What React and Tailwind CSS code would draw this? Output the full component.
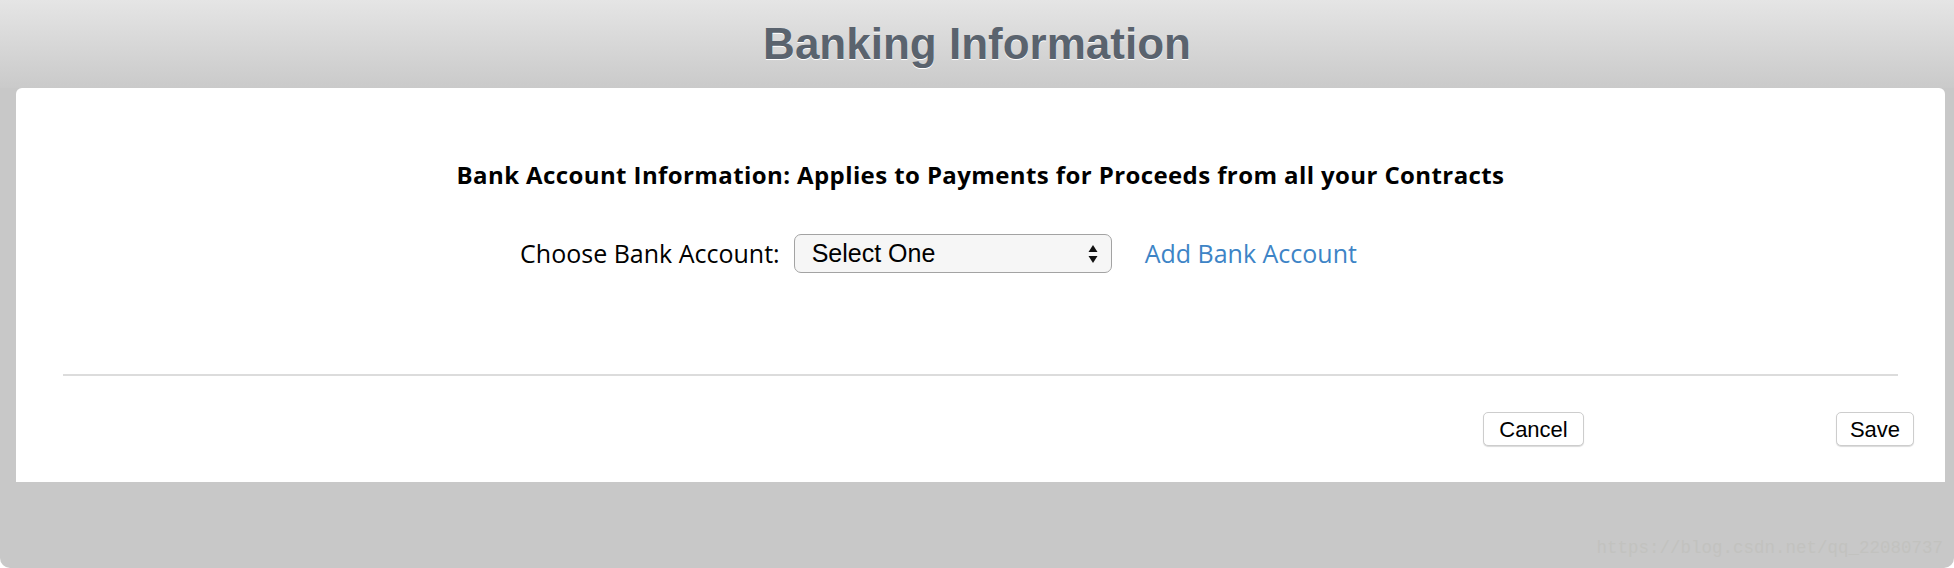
import React from 'react';

const SelectArrows = () => (
  <svg width="10" height="20" viewBox="0 0 10 20" className="shrink-0">
    <path d="M5 1 L9.5 8 L0.5 8 Z" fill="#111" />
    <path d="M0.5 12 L9.5 12 L5 19 Z" fill="#111" />
  </svg>
);

const App = () => {
  return (
    <div className="w-[1954px] h-[568px] bg-white">
      <div className="flex flex-col w-full h-full bg-[#c8c8c8] rounded-b-[10px] overflow-hidden">
        {/* Header */}
        <div className="h-[88px] shrink-0 bg-gradient-to-b from-[#e5e5e5] to-[#cacaca] flex justify-center pt-[19px]">
          <h1
            className="text-[44px] leading-[50px] font-bold text-[#5a636e] [text-shadow:0_1px_0_#ffffff]"
            style={{ fontFamily: '"Liberation Sans", Arial, sans-serif' }}
          >
            Banking Information
          </h1>
        </div>

        {/* Card */}
        <div
          className="ml-[16px] mr-[9px] bg-white rounded-t-[6px] flex flex-col pt-[71px] pb-[36px]"
          style={{ fontFamily: '"Open Sans", "Noto Sans", sans-serif' }}
        >
          <div className="text-center text-[24px] leading-[32px] font-bold text-black tracking-[0.4px]">
            Bank Account Information: Applies to Payments for Proceeds from all your Contracts
          </div>

          <div className="mt-[43px] flex items-center justify-center pr-[84px]">
            <span className="text-[25px] text-black">Choose Bank Account:</span>
            <div className="ml-[14px] w-[318px] h-[39px] rounded-[7px] border border-[#a3a3a3] bg-[#f6f6f6] flex items-center justify-between pl-[17px] pr-[13px]">
              <span
                className="text-[25px] text-black"
                style={{ fontFamily: '"Liberation Sans", Arial, sans-serif' }}
              >
                Select One
              </span>
              <SelectArrows />
            </div>
            <a href="#" className="ml-[33px] text-[25px] text-[#3d84c6]">
              Add Bank Account
            </a>
          </div>

          <div className="mt-[101px] mx-[47px] h-[2px] bg-[#dcdcdc]" />

          <div
            className="mt-[36px] flex justify-end gap-[252px] pr-[31px]"
            style={{ fontFamily: '"Liberation Sans", Arial, sans-serif' }}
          >
            <button className="w-[101px] h-[34px] rounded-[5px] border border-[#cdcdcd] bg-white text-[22px] text-black shadow-[0_1px_1px_rgba(0,0,0,0.15)]">
              Cancel
            </button>
            <button className="w-[78px] h-[34px] rounded-[5px] border border-[#cdcdcd] bg-white text-[22px] text-black shadow-[0_1px_1px_rgba(0,0,0,0.15)]">
              Save
            </button>
          </div>
        </div>

        {/* Footer gray area with watermark */}
        <div className="flex-1 flex items-end justify-end pr-[11px] pb-[10px]">
          <span
            className="text-[17.5px] leading-[20px] text-[#c2c2bf]"
            style={{ fontFamily: '"Liberation Mono", monospace' }}
          >
            https://blog.csdn.net/qq_22080737
          </span>
        </div>
      </div>
    </div>
  );
};

export default App;
